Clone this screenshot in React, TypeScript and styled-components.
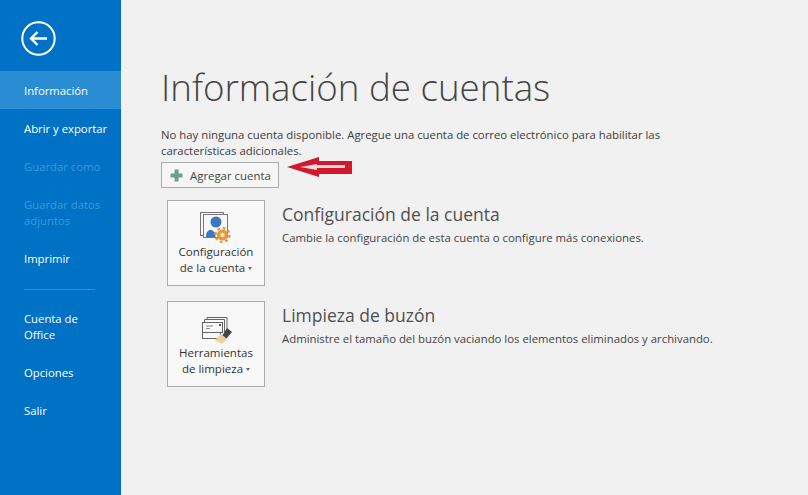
import styled, { createGlobalStyle } from 'styled-components';

const GlobalStyle = createGlobalStyle`
  html, body {
    margin: 0;
    padding: 0;
    background: #f1f1f1;
  }
  body {
    font-family: 'Open Sans', 'Noto Sans', 'Liberation Sans', sans-serif;
  }
`;

const Page = styled.div`
  display: flex;
  width: 808px;
  height: 495px;
  overflow: hidden;
  background: #f1f1f1;
`;

const Sidebar = styled.nav`
  width: 121px;
  flex: none;
  background: #0072c6;
  display: flex;
  flex-direction: column;
`;

const BackButton = styled.div`
  height: 71px;
  padding: 21px 0 0 21px;
  box-sizing: border-box;
`;

const NavItem = styled.div<{ $active?: boolean; $disabled?: boolean; $tall?: boolean }>`
  height: ${(p) => (p.$tall ? 54 : 38)}px;
  box-sizing: border-box;
  padding: 12px 0 0 24px;
  font-size: 11.3px;
  line-height: 16px;
  color: ${(p) => (p.$disabled ? '#3b97dc' : '#ffffff')};
  background: ${(p) => (p.$active ? '#2a8cd3' : 'transparent')};
`;

const NavRule = styled.div`
  height: 1px;
  width: 71px;
  margin: 12px 0 9px 24px;
  background: #2b8fd8;
`;

const Main = styled.main`
  flex: 1;
  padding: 62px 0 0 40px;
`;

const Title = styled.h1`
  margin: 0;
  font-size: 36.7px;
  line-height: 50px;
  font-weight: 300;
  color: #444444;
`;

const Notice = styled.p`
  margin: 15px 0 0;
  width: 530px;
  font-size: 11.35px;
  line-height: 16px;
  color: #3c3c3c;
`;

const AddRow = styled.div`
  position: relative;
  margin-top: 3px;
`;

const AddButton = styled.div`
  display: flex;
  align-items: center;
  gap: 7px;
  width: 118px;
  height: 26px;
  padding-left: 8px;
  box-sizing: border-box;
  border: 1px solid #ababab;
  background: #f6f6f6;
  font-size: 11.4px;
  color: #444444;
`;

const Arrow = styled.svg`
  position: absolute;
  left: 126px;
  top: -6px;
`;

const ActionList = styled.div`
  display: flex;
  flex-direction: column;
  gap: 15px;
  margin: 12px 0 0 6px;
`;

const Action = styled.section`
  display: flex;
  gap: 17px;
`;

const Tile = styled.div`
  width: 98px;
  height: 86px;
  box-sizing: border-box;
  border: 1px solid #ababab;
  background: #f8f8f8;
  display: flex;
  flex-direction: column;
  align-items: center;
  padding-top: 10px;
  font-size: 11.5px;
  line-height: 16px;
  color: #333333;
  text-align: center;
`;

const TileIcon = styled.svg`
  display: block;
  margin-bottom: 3px;
  overflow: visible;
`;

const Caret = styled.span`
  display: inline-block;
  width: 0;
  height: 0;
  margin-left: 3px;
  vertical-align: 2px;
  border-left: 2.5px solid transparent;
  border-right: 2.5px solid transparent;
  border-top: 3px solid #666666;
`;

const ActionText = styled.div`
  padding-top: 2px;
`;

const ActionTitle = styled.h2`
  margin: 0;
  font-size: 17.5px;
  line-height: 24px;
  font-weight: 400;
  color: #505050;
`;

const ActionDesc = styled.p`
  margin: 4px 0 0;
  font-size: 11.37px;
  line-height: 16px;
  color: #444444;
`;

function AccountIcon() {
  return (
    <TileIcon width="34" height="30" viewBox="0 0 34 30">
      <rect x="1.5" y="1.5" width="23" height="23" fill="none" stroke="#777" />
      <rect x="4.5" y="3.5" width="24" height="23" fill="#f8f8f8" stroke="#777" />
      <circle cx="17" cy="11" r="5.5" fill="#3b78bd" />
      <path d="M7 26c0-5 2-7 4.5-7s5 2 5 7z" fill="#3b78bd" />
      <circle cx="23.5" cy="24" r="5.5" fill="#e39a3f" />
      <circle cx="23.5" cy="24" r="7" fill="none" stroke="#e39a3f" strokeWidth="2.4" strokeDasharray="2.6 2.9" />
      <circle cx="23.5" cy="24" r="2.2" fill="#fbe6c8" />
    </TileIcon>
  );
}

function CleanupIcon() {
  return (
    <TileIcon width="34" height="30" viewBox="0 0 34 30">
      <path d="M8 8V5.5h20V18" fill="none" stroke="#666" />
      <path d="M5.5 10V7.5h20V20" fill="#f8f8f8" stroke="#666" />
      <rect x="3.5" y="10.5" width="20" height="10" fill="#f8f8f8" stroke="#666" />
      <path d="M7 14h7M7 16.5h4" stroke="#888" />
      <rect x="20" y="12" width="2" height="2" fill="#555" />
      <rect x="3.5" y="20.5" width="18" height="6" fill="#f8f8f8" stroke="#666" />
      <path d="M23 24l5-8 5 4-6 7z" fill="#444" />
      <path d="M22 22l6 5-5 5-7-4z" fill="#e8d49a" />
    </TileIcon>
  );
}

export default function App() {
  return (
    <Page>
      <GlobalStyle />
      <Sidebar>
        <BackButton>
          <svg width="35" height="35" viewBox="0 0 35 35">
            <circle cx="17.5" cy="17.5" r="16.2" fill="none" stroke="#fff" strokeWidth="2" />
            <path d="M26 17.5H10M16.5 11l-6.5 6.5 6.5 6.5" fill="none" stroke="#fff" strokeWidth="2.4" />
          </svg>
        </BackButton>
        <NavItem $active>Información</NavItem>
        <NavItem>Abrir y exportar</NavItem>
        <NavItem $disabled>Guardar como</NavItem>
        <NavItem $disabled $tall>Guardar datos<br />adjuntos</NavItem>
        <NavItem>Imprimir</NavItem>
        <NavRule />
        <NavItem $tall>Cuenta de<br />Office</NavItem>
        <NavItem>Opciones</NavItem>
        <NavItem>Salir</NavItem>
      </Sidebar>
      <Main>
        <Title>Información de cuentas</Title>
        <Notice>
          No hay ninguna cuenta disponible. Agregue una cuenta de correo electrónico para habilitar las características adicionales.
        </Notice>
        <AddRow>
          <AddButton>
            <svg width="13" height="13" viewBox="0 0 13 13">
              <path d="M4.5 0.5h4v4h4v4h-4v4h-4v-4h-4v-4h4z" fill="#6f9e90" />
            </svg>
            Agregar cuenta
          </AddButton>
          <Arrow width="68" height="24" viewBox="0 0 68 24">
            <path d="M0 11L32 1V5H65V18H32V21Z" fill="#d3182b" />
            <path d="M13 11L30 8V9H58V12H30V14Z" fill="#f6d8d8" />
          </Arrow>
        </AddRow>
        <ActionList>
          <Action>
            <Tile>
              <AccountIcon />
              <span>Configuración</span>
              <span>de la cuenta<Caret /></span>
            </Tile>
            <ActionText>
              <ActionTitle>Configuración de la cuenta</ActionTitle>
              <ActionDesc>Cambie la configuración de esta cuenta o configure más conexiones.</ActionDesc>
            </ActionText>
          </Action>
          <Action>
            <Tile>
              <CleanupIcon />
              <span>Herramientas</span>
              <span>de limpieza<Caret /></span>
            </Tile>
            <ActionText>
              <ActionTitle>Limpieza de buzón</ActionTitle>
              <ActionDesc>Administre el tamaño del buzón vaciando los elementos eliminados y archivando.</ActionDesc>
            </ActionText>
          </Action>
        </ActionList>
      </Main>
    </Page>
  );
}
